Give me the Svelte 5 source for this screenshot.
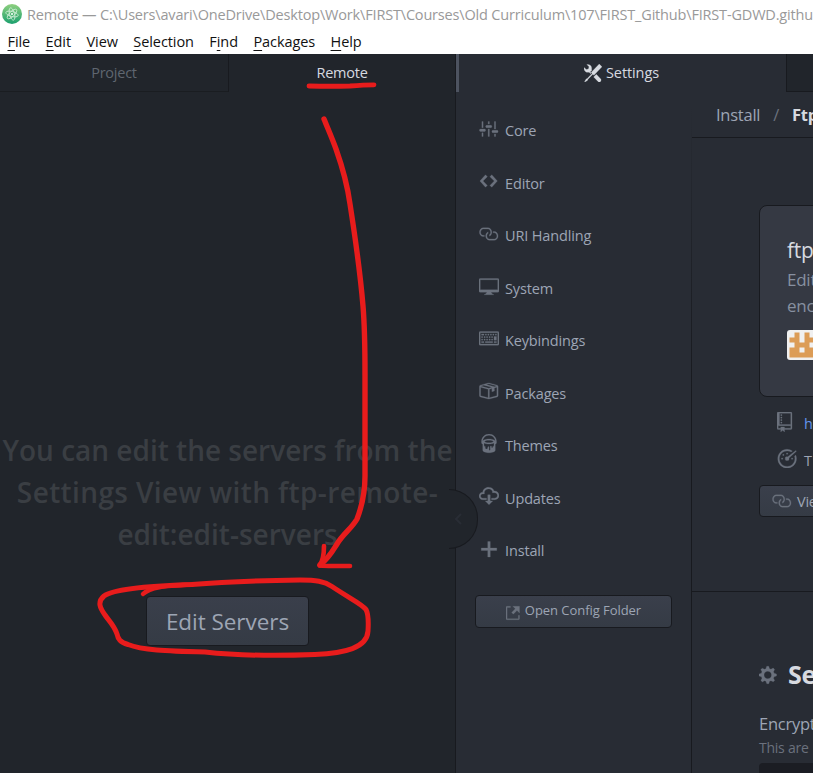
<script>
  const path = 'Remote — C:\\Users\\avari\\OneDrive\\Desktop\\Work\\FIRST\\Courses\\Old Curriculum\\107\\FIRST_Github\\FIRST-GDWD.githu';
  const menus = [
    ['', 'F', 'ile'], ['', 'E', 'dit'], ['', 'V', 'iew'], ['', 'S', 'election'],
    ['F', 'i', 'nd'], ['', 'P', 'ackages'], ['', 'H', 'elp']
  ];
  const icons = {
    settings: 'M4 7H3V2h1v5zm-1 7h1v-3H3v3zm5 0h1V8H8v6zm5 0h1v-2h-1v2zm1-12h-1v6h1V2zM9 2H8v2h1V2zM5 8H2c-.55 0-1 .45-1 1s.45 1 1 1h3c.55 0 1-.45 1-1s-.45-1-1-1zm5-3H7c-.55 0-1 .45-1 1s.45 1 1 1h3c.55 0 1-.45 1-1s-.45-1-1-1zm5 4h-3c-.55 0-1 .45-1 1s.45 1 1 1h3c.55 0 1-.45 1-1s-.45-1-1-1z',
    code: 'M10.5 3L9 4.5 12.500 8 9 11.500 10.500 13 15 8 10.500 3zm-5 0L1 8l4.500 5L7 11.500 3.500 8 7 4.500 5.500 3z',
    link: 'M4 9h1v1H4c-1.500 0-3-1.690-3-3.500S2.550 3 4 3h4c1.450 0 3 1.690 3 3.500 0 1.410-.910 2.720-2 3.250V8.590c.580-.450 1-1.270 1-2.090C10 5.220 8.980 4 8 4H4c-.980 0-2 1.220-2 2.500S3 9 4 9zm9-3h-1v1h1c1 0 2 1.220 2 2.500S13.980 12 13 12H9c-.980 0-2-1.220-2-2.500 0-.830.420-1.640 1-2.090V6.250c-1.090.530-2 1.840-2 3.250C6 11.310 7.550 13 9 13h4c1.450 0 3-1.690 3-3.500S14.500 6 13 6z',
    desktop: 'M15 2H1c-.55 0-1 .45-1 1v9c0 .55.45 1 1 1h5.34c-.25.61-.86 1.39-2.34 2h8c-1.48-.61-2.09-1.39-2.34-2H15c.55 0 1-.45 1-1V3c0-.55-.45-1-1-1zm0 9H1V3h14v8z',
    keyboard: 'M10 5H9V4h1v1zM3 6H2v1h1V6zm5-2H7v1h1V4zM4 4H2v1h2V4zm8 7h2v-1h-2v1zM8 7h1V6H8v1zm-4 3H2v1h2v-1zm8-6h-1v1h1V4zm2 0h-1v1h1V4zm-2 5h2V6h-2v3zm4-6v9c0 .55-.45 1-1 1H1c-.55 0-1-.45-1-1V3c0-.55.45-1 1-1h14c.55 0 1 .45 1 1zm-1 0H1v9h14V3zM6 7h1V6H6v1zm0-3H5v1h1V4zM4 7h1V6H4v1zm1 4h6v-1H5v1zm5-4h1V6h-1v1zM3 8H2v1h1V8zm5 0v1h1V8H8zM6 8v1h1V8H6zM5 8H4v1h1V8zm5 1h1V8h-1v1z',
    pack: 'M1 4.27v7.47c0 .45.3.84.75.97l6.5 1.73c.16.05.34.05.5 0l6.5-1.73c.45-.13.75-.52.75-.97V4.27c0-.45-.3-.84-.75-.97l-6.5-1.74a1.4 1.4 0 0 0-.5 0L1.75 3.3c-.45.13-.75.52-.75.97zm7 9.09l-6-1.59V5l6 1.61v6.75zM2 4l2.5-.67L11 5.06l-2.5.67L2 4zm13 7.77l-6 1.59V6.61l2-.55V8.5l2-.53V5.53L15 5v6.77zm-2-7.24L6.5 2.8l2-.53L15 4l-2 .53z',
    paint: 'M8 0C4.69 0 2 2.69 2 6v1c0 .55.45 1 1 1v5c0 1.1 2.24 2 5 2s5-.9 5-2V8c.55 0 1-.45 1-1V6c0-3.31-2.69-6-6-6zm3 10v.5c0 .28-.22.5-.5.5s-.5-.22-.5-.5V10c0-.28-.22-.5-.5-.5s-.5.22-.5.5v2.5c0 .28-.22.5-.5.5s-.5-.22-.5-.5v-2c0-.28-.22-.5-.5-.5s-.5.22-.5.5v.5c0 .55-.45 1-1 1s-1-.45-1-1v-1c-.55 0-1-.45-1-1V7.2c.91.49 2.36.8 4 .8 1.64 0 3.09-.31 4-.8V9c0 .55-.45 1-1 1zM8 7c-1.68 0-3.12-.41-3.71-1C4.88 5.41 6.32 5 8 5c1.68 0 3.12.41 3.71 1-.59.59-2.03 1-3.71 1zm0-3c-2.76 0-5 .89-5 2 0-2.76 2.24-5 5-5s5 2.24 5 5c0-1.1-2.24-2-5-2z',
    cloud: 'M9 12h2l-3 3-3-3h2V7h2v5zm3-8c0-.44-.91-3-4.5-3C5.08 1 3 2.92 3 5 1.02 5 0 6.52 0 8c0 1.53 1 3 3 3h3V9.7H3C1.38 9.7 1.3 8.28 1.3 8c0-.17.05-1.7 1.7-1.7h1.3V5c0-1.39 1.56-2.7 3.2-2.7 2.55 0 3.13 1.55 3.2 1.8v1.2H12c.81 0 2.7.22 2.7 2.2 0 2.09-2.25 2.2-2.7 2.2h-2V11h2c2.08 0 4-1.16 4-3.5C16 5.06 14.08 4 12 4z',
    plus: 'M14.200 7.200v2H9v5.200H7V9.200H1.800V7.200H7V2h2v5.200z',
    external: 'M11 10h1v3c0 .55-.45 1-1 1H1c-.55 0-1-.45-1-1V3c0-.55.45-1 1-1h3v1H1v10h10v-3zM6 2l2.25 2.25L5 7.5 6.5 9l3.25-3.25L12 8V2H6z',
    tools: 'M4.48 7.27c.26.26 1.28 1.33 1.28 1.33l.56-.58-.88-.91 1.69-1.8s-.76-.74-.43-.45c.32-1.19.03-2.51-.87-3.44C4.93.5 3.66.2 2.52.51l1.93 2-.51 1.96-1.89.52-1.93-1.99C-.19 4.17.1 5.48 1 6.4c.94.98 2.29 1.26 3.48.87zm6.44 1.94l-2.33 2.3 3.84 3.98c.31.33.73.49 1.14.49.41 0 .82-.16 1.14-.49.63-.65.63-1.7 0-2.35l-3.79-3.93zM16 2.53L13.55 0 6.33 7.46l.88.91-4.31 4.46-.99.53-1.39 2.27.35.37 2.2-1.44.51-1.02L7.9 9.08l.88.91L16 2.53z',
    repo: 'M4 9H3V8h1v1zm0-3H3v1h1V6zm0-2H3v1h1V4zm0-2H3v1h1V2zm8-1v12c0 .55-.45 1-1 1H6v2l-1.5-1.5L3 16v-2H1c-.55 0-1-.45-1-1V1c0-.55.45-1 1-1h10c.55 0 1 .45 1 1zm-1 10H1v2h2v-1h3v1h5v-2zm0-10H2v9h9V1z',
    dashboard: 'M9 5H8V4h1v1zm4 3h-1v1h1V8zM6 5H5v1h1V5zM5 8H4v1h1V8zm11-5.5l-.5-.5L9 7c-.06-.02-1 0-1 0-.55 0-1 .45-1 1v1c0 .55.45 1 1 1h1c.55 0 1-.45 1-1v-.92l6-5.58zm-1.59 4.09c.19.61.3 1.25.3 1.91 0 3.42-2.78 6.2-6.2 6.2-3.42 0-6.21-2.78-6.21-6.2 0-3.42 2.78-6.2 6.2-6.2 1.2 0 2.31.34 3.27.94l.94-.94A7.459 7.459 0 0 0 8.51 1C4.36 1 1 4.36 1 8.5 1 12.64 4.36 16 8.5 16c4.14 0 7.5-3.36 7.5-7.5 0-1.03-.2-2.02-.59-2.91l-1 1z',
    gear: 'M14 8.77v-1.6l-1.94-.64-.45-1.09.88-1.84-1.13-1.13-1.81.91-1.09-.45-.69-1.92h-1.6l-.63 1.94-1.11.45-1.84-.88-1.13 1.13.91 1.81-.45 1.09L0 7.23v1.59l1.94.64.45 1.09-.88 1.84 1.13 1.13 1.81-.91 1.09.45.69 1.92h1.59l.63-1.94 1.11-.45 1.84.88 1.13-1.13-.92-1.81.47-1.09L14 8.75v.02zM7 11c-1.66 0-3-1.34-3-3s1.34-3 3-3 3 1.34 3 3-1.34 3-3 3z'
  };
  const inset = { settings: 0.7, code: 0.3, link: 0.7, pack: 0.7, dashboard: 0.4 };
  const nav = [
    ['settings', 'Core'], ['code', 'Editor'], ['link', 'URI Handling'], ['desktop', 'System'],
    ['keyboard', 'Keybindings'], ['pack', 'Packages'], ['paint', 'Themes'], ['cloud', 'Updates'], ['plus', 'Install']
  ];
</script>

{#snippet icon(name, size = 20)}
  <svg class="icon" width={size} height={size} viewBox="{inset[name] ?? 0} 0 16 16"><path d={icons[name]} /></svg>
{/snippet}

<div class="window">
  <header class="titlebar">
    <svg class="logo" width="20" height="20" viewBox="0 0 20 20">
      <defs><linearGradient id="g" x1="0" y1="0" x2="0" y2="1"><stop offset="0" stop-color="#8fd07f" /><stop offset="1" stop-color="#1ba06e" /></linearGradient></defs>
      <circle cx="10" cy="10" r="10" fill="url(#g)" />
      <g fill="none" stroke="#d4f0da" stroke-width=".8">
        <ellipse cx="10" cy="10" rx="6.300" ry="2.500" transform="rotate(15 10 10)" />
        <ellipse cx="10" cy="10" rx="6.300" ry="2.500" transform="rotate(75 10 10)" />
        <ellipse cx="10" cy="10" rx="6.300" ry="2.500" transform="rotate(135 10 10)" />
      </g>
      <circle cx="10" cy="10" r="1" fill="#fff" />
    </svg>
    <span>{path}</span>
  </header>
  <nav class="menubar">
    {#each menus as [a, u, b]}<span>{a}<i>{u}</i>{b}</span>{/each}
  </nav>

  <div class="workspace">
    <section class="dock">
      <div class="tabs">
        <div class="tab off">Project</div>
        <div class="tab on">Remote</div>
      </div>
      <div class="empty">
        <p><span class="l1">You can edit the servers from the</span><br /><span class="l2">Settings View with ftp-remote-</span><br /><span class="l3">edit:edit-servers</span></p>
        <button>Edit Servers</button>
      </div>
    </section>

    <section class="main">
      <div class="maintabs">
        <div class="maintab">{@render icon('tools', 18)}<span>Settings</span></div>
        <div class="nexttab"></div>
      </div>
      <div class="settings">
        <aside>
          <ul>
            {#each nav as [ic, label]}
              <li>{@render icon(ic)}<span>{label}</span></li>
            {/each}
          </ul>
          <button class="config">{@render icon('external', 18)}<span>Open Config Folder</span></button>
        </aside>
        <div class="divider"></div>
        <div class="detail">
          <div class="crumbs"><span>Install</span><em>/</em><b>Ftp</b></div>
          <div class="info">
            <div class="card">
              <h2>ftp</h2>
              <p>Edit<br />enc</p>
              <svg width="30" height="30" viewBox="0 0 30 30">
                <rect width="30" height="30" rx="3" fill="#f0f0f0" />
                <path fill="#dc9c56" d="M2.500 7.500h5v-5h5v10h5v-10h5v5h5v5h-5v5h5v10h-25v-10h5v-5h-5zM12.500 17.500v5h5v-5z" fill-rule="evenodd" />
              </svg>
            </div>
            <div class="meta repo">{@render icon('repo')}<a href="#repo">h</a></div>
            <div class="meta dash">{@render icon('dashboard')}<span>T</span></div>
            <button class="view">{@render icon('link')}<span>Vie</span></button>
          </div>
          <div class="config-section">
            <h3>{@render icon('gear')}<span>Se</span></h3>
            <h4>Encrypt</h4>
            <small>This are</small>
            <div class="input"></div>
          </div>
        </div>
      </div>
      <div class="handle"><svg width="9" height="14" viewBox="0 0 9 14"><path d="M7 2L2 7l5 5" /></svg></div>
    </section>
  </div>

  <svg class="ink" width="813" height="773" viewBox="0 0 813 773">
    <path d="M309 86Q330 86.500 350 86Q364 84.800 374 84.800" stroke-width="4.800" />
    <path d="M324 119C328 129 332 138 336 149C342 166 347 182 350 204C355 236 360 270 363 306C365 330 365 350 365 375L365 476C365 492 362 506 357 519C352 528 343 534 337 544C332 552 329 558 320 565" stroke-width="5.400" />
    <path d="M324 546C324 555 323 561 319.500 565.500Q323 566 350 566" stroke-width="4.600" />
    <path d="M143 594C150 587 163 586 192 584.500" stroke-width="4.500" />
    <path d="M192 584.500C145 586 112 590 104 596C97 602 100 608 105 615C109 621 114 625 117 634C118 639 120 642 128 644.500C142 650 165 651 205 652Q250 657 315 654.500C345 653 367 648 368 631C368.500 623 369 615 366 609.500C362 604 349 598 332 586.500C324 581 316 580 300 580Q235 581 192 584.500" stroke-width="5" />
  </svg>
</div>

<style>
  .window { position: relative; width: 813px; height: 773px; overflow: hidden; display: flex; flex-direction: column; background: #282c34; font-family: "Open Sans", "Noto Sans", sans-serif; font-size: 14.5px; letter-spacing: -0.25px; color: #9da5b4; white-space: nowrap; }
  button { font: inherit; letter-spacing: inherit; color: inherit; padding: 0; border: 1px solid #181a1f; background: linear-gradient(#3a3f4b, #353b45); border-radius: 4px; box-sizing: border-box; }
  .icon { flex: none; fill: #6b717d; stroke: #6b717d; stroke-width: 0.2; display: block; }
  .titlebar { height: 29px; flex: none; background: #fff; color: #999; display: flex; align-items: center; box-sizing: border-box; padding-left: 2px; gap: 5px; letter-spacing: -0.175px; }
  .logo { flex: none; margin-top: -1px; }
  .menubar { height: 25px; flex: none; background: #fff; color: #111; display: flex; padding-left: 7.500px; gap: 15.500px; line-height: 25px; letter-spacing: -0.09px; }
  .menubar i { font-style: normal; text-decoration: underline; text-underline-offset: 3px; text-decoration-thickness: 1px; text-decoration-skip-ink: none; }
  .workspace { flex: 1; display: flex; min-height: 0; }
  .dock { width: 455px; flex: none; background: #21252b; border-right: 1px solid #181a1f; display: flex; flex-direction: column; }
  .tabs { height: 38px; display: flex; line-height: 37px; text-align: center; }
  .tab { flex: 1; box-sizing: border-box; }
  .off { flex: none; width: 229px; border-right: 1px solid #181a1f; border-bottom: 1px solid #1a1d21; color: #5f6670; }
  .on { color: #d7dae0; }
  .empty { flex: 1; display: flex; flex-direction: column; align-items: center; }
  .empty p { margin: 337px 0 0; line-height: 42px; font-size: 28px; font-weight: 600; color: #3a3e43; text-align: center; }
  .l1 { letter-spacing: 0; }
  .l2 { letter-spacing: 0.38px; }
  .l3 { letter-spacing: 0; }
  .empty button { width: 163px; height: 50px; margin-top: 41px; font-size: 22.500px; letter-spacing: -0.05px; }
  .main { position: relative; flex: 1; min-width: 0; display: flex; flex-direction: column; }
  .maintabs { height: 38px; display: flex; flex: none; }
  .maintab { width: 331px; box-sizing: border-box; border-left: 3px solid #4d5360; display: flex; align-items: center; justify-content: center; gap: 4px; padding: 0 3px 1px 0; letter-spacing: -0.1px; color: #d7dae0; }
  .maintab .icon { fill: #d7dae0; stroke: #d7dae0; }
  .nexttab { flex: 1; background: #21252b; border-left: 1px solid #181a1f; border-bottom: 1px solid #181a1f; margin-left: -1px; }
  .settings { flex: 1; display: flex; min-height: 0; }
  aside { width: 235px; flex: none; }
  ul { list-style: none; margin: 12.500px 0 0; padding: 0 0 0 23px; }
  li { height: 52.500px; display: flex; align-items: center; gap: 6px; letter-spacing: -0.15px; }
  li .icon { margin-top: -4px; }
  .config { width: 197px; height: 33px; margin: 17.500px 0 0 19px; display: flex; align-items: center; justify-content: center; gap: 1px; font-size: 13px; letter-spacing: -0.05px; }
  .config .icon { margin-top: 3px; }
  .config span { margin-top: -3px; }
  .divider { width: 1px; background: linear-gradient(transparent 10px, #181a1f 300px); }
  .detail { flex: 1; min-width: 0; overflow: hidden; }
  .crumbs { height: 46px; box-sizing: border-box; border-bottom: 1px solid #181a1f; padding-left: 24px; line-height: 46px; font-size: 16.500px; }
  .crumbs em { font-style: normal; color: #6b717d; margin: 0 13px; }
  .crumbs b { color: #d7dae0; }
  .info { height: 454px; padding: 67px 0 0 67px; box-sizing: border-box; border-bottom: 1px solid #181a1f; }
  .card { width: 400px; height: 192px; box-sizing: border-box; background: #353943; border: 1px solid #181a1f; border-radius: 8px; padding: 29px 0 0 27px; }
  .card h2 { margin: 0; font-size: 21px; line-height: 30px; font-weight: 400; color: #d7dae0; }
  .card p { margin: 2px 0 11px; font-size: 17px; line-height: 26px; color: #8790a0; }
  .card svg { display: block; }
  .meta { height: 38px; display: flex; align-items: center; padding-left: 18px; gap: 7px; }
  .meta.repo { margin-top: 7px; }
  .repo .icon { margin-top: -2px; }
  .meta.dash { height: 36px; }
  .meta.dash .icon { margin-top: -5px; }
  a { color: #6494ed; text-decoration: none; }
  .view { width: 200px; height: 32px; margin-top: 7px; display: flex; align-items: center; padding-left: 12px; gap: 5px; }
  .config-section { padding: 66px 0 0 67px; }
  h3 { margin: 0; display: flex; align-items: center; gap: 9px; font-size: 25px; line-height: 32px; color: #d7dae0; }
  h3 .icon { margin-top: 2px; }
  h4 { margin: 21px 0 0; font-size: 16.500px; line-height: 26px; font-weight: 400; }
  small { display: block; font-size: 14px; line-height: 22px; color: #6b717d; }
  .input { width: 300px; height: 40px; margin-top: 4px; border-radius: 4px; background: #1b1d23; }
  .handle { position: absolute; left: -7px; top: 435px; width: 29px; height: 60px; box-sizing: border-box; background: #21252b; border: 1px solid #181a1f; border-left: 0; border-radius: 0 30px 30px 0; display: flex; align-items: center; padding-left: 5px; }
  .handle path { fill: none; stroke: #292d35; stroke-width: 2; }
  .ink { position: absolute; inset: 0; pointer-events: none; fill: none; stroke: #e81c1c; stroke-linecap: round; stroke-linejoin: round; }
</style>
